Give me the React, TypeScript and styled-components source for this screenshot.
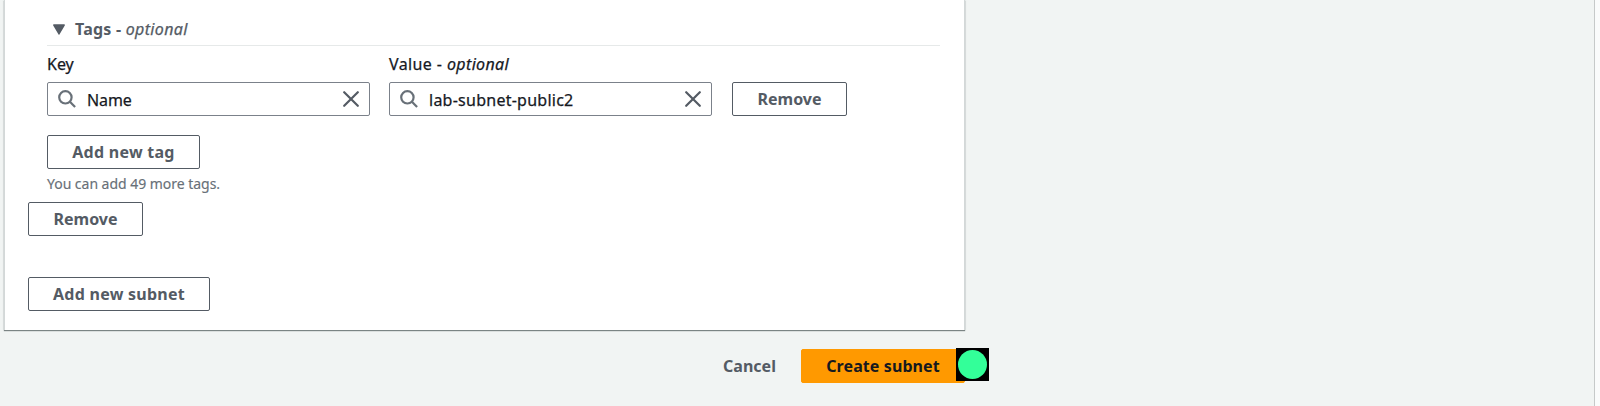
import React from 'react';
import styled, { createGlobalStyle } from 'styled-components';

const GlobalStyle = createGlobalStyle`
  * { box-sizing: border-box; }
  body {
    margin: 0;
    background: #f1f4f3;
    color: #16191f;
    font: 16px/22px "Noto Sans", "Open Sans", sans-serif;
  }
`;

const Page = styled.main`
  width: 1595px;
  height: 406px;
  padding-left: 4px;
  overflow: hidden;
  border-right: 1px solid #c6c9c9;
  box-shadow: 5px 0 0 #fafbfb;
`;

const Content = styled.div`
  width: 961px;
`;

const Card = styled.section`
  display: flex;
  flex-direction: column;
  align-items: flex-start;
  height: 330px;
  padding: 18px 24px 0 23px;
  background: #fff;
  border: solid #d3d8d8;
  border-width: 0 1px;
  box-shadow: 0 1px 1px #7b8484, 0 0 2px #d5dbdb;
`;

const TagSection = styled.div`
  width: 893px;
  margin-left: 19px;
`;

const SectionHeader = styled.div`
  display: flex;
  align-items: center;
  height: 28px;
  padding: 0 0 5px 6px;
  border-bottom: 1px solid #e6e9e9;
  color: #545b64;
  font-weight: 700;
  svg { margin-right: 10px; }
`;

const Title = styled.span<{ $spacing?: number }>`
  letter-spacing: ${(p) => p.$spacing ?? 0}px;
  white-space: pre;
`;

const Optional = styled.i`
  font-weight: 400;
  letter-spacing: 0.36px;
  -webkit-text-stroke: 0.25px currentColor;
`;

const TagRow = styled.div`
  display: grid;
  grid-template-columns: 323px 323px 115px;
  column-gap: 19px;
  align-items: end;
  margin-top: 7px;
`;

const Label = styled.div`
  height: 29px;
  color: #16191f;
  -webkit-text-stroke: 0.25px currentColor;
`;

const Field = styled.div`
  display: flex;
  align-items: center;
  height: 34px;
  padding: 0 10px;
  background: #fff;
  border: 1px solid #7b818a;
  border-radius: 2px;
`;

const FieldText = styled.span<{ $spacing?: number }>`
  flex: 1;
  margin-left: 11px;
  padding-top: 1px;
  letter-spacing: ${(p) => p.$spacing ?? 0}px;
  -webkit-text-stroke: 0.25px currentColor;
`;

const Button = styled.button<{ $kind?: 'primary' | 'link'; $width: number; $spacing?: number }>`
  width: ${(p) => p.$width}px;
  height: 34px;
  padding: 0;
  border: 1px solid ${(p) => (p.$kind === 'primary' ? '#ff9900' : p.$kind === 'link' ? 'transparent' : '#545b64')};
  border-radius: 2px;
  background: ${(p) => (p.$kind === 'primary' ? '#ff9900' : p.$kind === 'link' ? 'transparent' : '#fff')};
  color: ${(p) => (p.$kind === 'primary' ? '#16191f' : '#545b64')};
  font: inherit;
  font-weight: 700;
  letter-spacing: ${(p) => p.$spacing ?? 0}px;
  white-space: nowrap;
`;

const RemoveTag = styled(Button)`
  margin-left: 1px;
`;

const AddTag = styled.div`
  margin-top: 19px;
`;

const Hint = styled.div`
  margin-top: 5px;
  color: #687078;
  font-size: 14px;
  line-height: 20px;
  letter-spacing: -0.03px;
  -webkit-text-stroke: 0.15px currentColor;
`;

const RemoveSubnet = styled.div`
  height: 34px;
  margin-top: 8px;
`;

const AddSubnet = styled.div`
  height: 34px;
  margin-top: 41px;
`;

const Actions = styled.footer`
  display: flex;
  justify-content: flex-end;
  margin-top: 19px;
`;

const SubmitArea = styled.div`
  position: relative;
  height: 34px;
`;

const Marker = styled.span`
  position: absolute;
  top: -1px;
  right: -24px;
  display: grid;
  place-items: center;
  width: 33px;
  height: 33px;
  background: #000;
  &::before {
    content: "";
    width: 29px;
    height: 29px;
    border-radius: 50%;
    background: #33ff99;
  }
`;

const CaretIcon = () => (
  <svg width="12" height="11" viewBox="0 0 12 11" fill="#545b64">
    <path d="M.8.3h10.4c.6 0 .9.6.6 1.1L6.6 10.2a.7.7 0 0 1-1.2 0L.2 1.4C-.1.9.2.3.8.3Z" />
  </svg>
);

const SearchIcon = () => (
  <svg width="18" height="18" viewBox="0 0 18 18" fill="none" stroke="#687078" strokeWidth="2.2">
    <circle cx="7.4" cy="7.3" r="6.2" />
    <path d="m11.9 11.8 5.2 5.2" />
  </svg>
);

const CloseIcon = () => (
  <svg width="16" height="16" viewBox="0 0 16 16" fill="none" stroke="#545b64" strokeWidth="2.2" strokeLinecap="round">
    <path d="m1.2 1.2 13.6 13.6M14.8 1.2 1.2 14.8" />
  </svg>
);

const SearchField = ({ value, spacing }: { value: string; spacing: number }) => (
  <Field>
    <SearchIcon />
    <FieldText $spacing={spacing}>{value}</FieldText>
    <CloseIcon />
  </Field>
);

export default function App() {
  return (
    <>
      <GlobalStyle />
      <Page>
        <Content>
          <Card>
            <TagSection>
              <SectionHeader>
                <CaretIcon />
                <Title $spacing={0.22}>{'Tags - '}</Title>
                <Optional>optional</Optional>
              </SectionHeader>
              <TagRow>
                <div>
                  <Label>Key</Label>
                  <SearchField value="Name" spacing={-0.1} />
                </div>
                <div>
                  <Label>
                    <Title $spacing={0.4}>{'Value - '}</Title>
                    <Optional>optional</Optional>
                  </Label>
                  <SearchField value="lab-subnet-public2" spacing={0.25} />
                </div>
                <RemoveTag $width={115}>Remove</RemoveTag>
              </TagRow>
              <AddTag>
                <Button $width={153} $spacing={0.26}>Add new tag</Button>
                <Hint>You can add 49 more tags.</Hint>
              </AddTag>
            </TagSection>
            <RemoveSubnet>
              <Button $width={115}>Remove</Button>
            </RemoveSubnet>
            <AddSubnet>
              <Button $width={182} $spacing={0.26}>Add new subnet</Button>
            </AddSubnet>
          </Card>
          <Actions>
            <Button $kind="link" $width={103}>Cancel</Button>
            <SubmitArea>
              <Button $kind="primary" $width={164} $spacing={0.1}>Create subnet</Button>
              <Marker />
            </SubmitArea>
          </Actions>
        </Content>
      </Page>
    </>
  );
}
